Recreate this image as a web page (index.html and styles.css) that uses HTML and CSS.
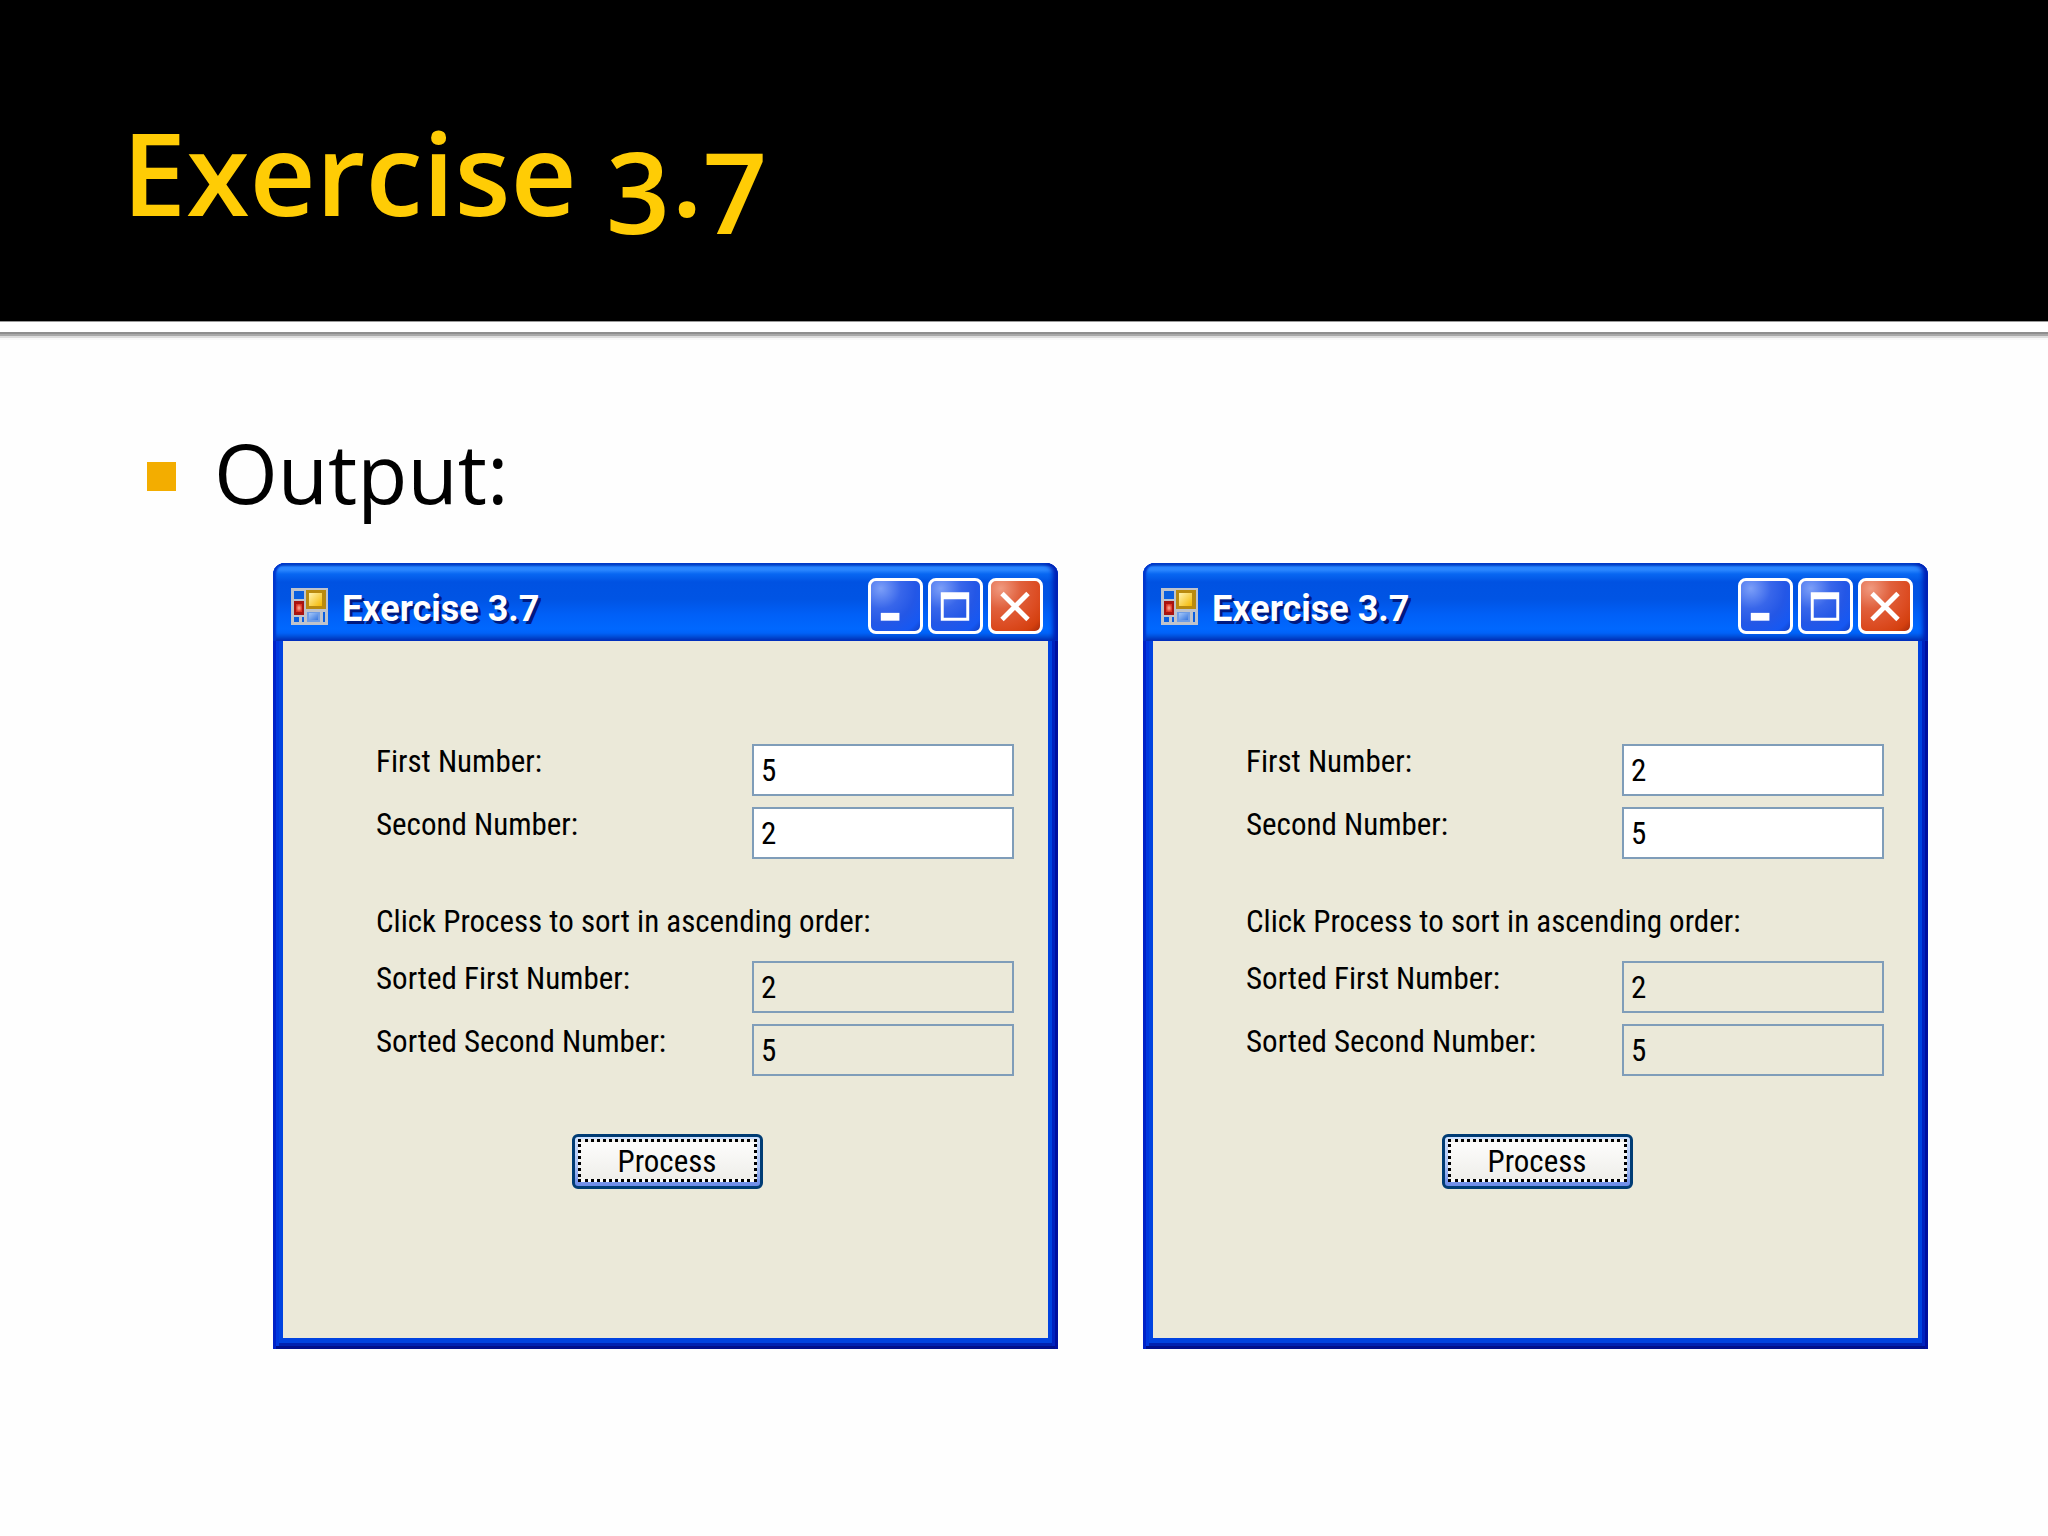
FILE: index.html
```
<!DOCTYPE html>
<html lang="en">
<head>
<meta charset="utf-8">
<meta name="viewport" content="width=device-width, initial-scale=1">
<title>Exercise 3.7</title>
<link rel="stylesheet" href="styles.css">
</head>
<body>
<svg class="sprite" width="0" height="0" aria-hidden="true">
  <defs>
    <linearGradient id="gold" x1="0" y1="0" x2="1" y2="1"><stop offset="0" stop-color="#fff3b0"/><stop offset="1" stop-color="#f5b800"/></linearGradient>
    <radialGradient id="ruby"><stop offset="0" stop-color="#ffb09c"/><stop offset="1" stop-color="#dd3323"/></radialGradient>
    <linearGradient id="sky" x1="0" y1="0" x2="1" y2="1"><stop offset="0" stop-color="#a5c8fa"/><stop offset="1" stop-color="#3a78df"/></linearGradient>
    <symbol id="form-icon" viewBox="0 0 37 37">
      <path fill="#bfc3cb" d="M0 0h37v37H0z"/>
      <path fill="#0a5fe0" d="M3 3h10v8H3zM3 29h5v5H3zM11 29h2v5h-2zM32 24h2v10h-2z"/>
      <path fill="#b98a10" d="M15 2h20v19H15z"/><path fill="url(#gold)" d="M18 5h13v13H18z"/>
      <path fill="#a81410" d="M3 13h10v14H3z"/><path fill="url(#ruby)" d="M5 16h6v8H5z"/>
      <path fill="#6f9de6" d="M16 24h13v10H16z"/><path fill="url(#sky)" d="M18 25h9v7h-9z"/>
    </symbol>
    <symbol id="minimize" viewBox="0 0 50 50"><path fill="#fff" d="M10 32h19v8H10z"/></symbol>
    <symbol id="maximize" viewBox="0 0 50 50"><path fill="#fff" fill-rule="evenodd" d="M10 11h29v29H10zM13 18v19h23V18z"/></symbol>
    <symbol id="close" viewBox="0 0 50 50"><path stroke="#fff" stroke-width="5" stroke-linecap="square" d="M13 14l23 23M36 14L13 37"/></symbol>
  </defs>
</svg>

<header class="slide-header">
  <h1 class="slide-title">Exercise 3.7</h1>
</header>

<main class="slide-body">
  <ul class="bullets">
    <li class="bullet"><span class="bullet-text">Output:</span></li>
  </ul>

  <div class="windows">
    <section class="window">
      <div class="titlebar">
        <svg class="app-icon" aria-hidden="true"><use href="#form-icon"/></svg>
        <h2 class="window-title">Exercise 3.7</h2>
        <div class="controls">
          <button class="control" type="button" aria-label="Minimize"><svg class="glyph"><use href="#minimize"/></svg></button>
          <button class="control" type="button" aria-label="Maximize"><svg class="glyph"><use href="#maximize"/></svg></button>
          <button class="control control-close" type="button" aria-label="Close"><svg class="glyph"><use href="#close"/></svg></button>
        </div>
      </div>
      <form class="client">
        <div class="row"><label class="label" for="a-first">First Number:</label><input class="field" id="a-first" type="text" value="5"></div>
        <div class="row"><label class="label" for="a-second">Second Number:</label><input class="field" id="a-second" type="text" value="2"></div>
        <p class="hint">Click Process to sort in ascending order:</p>
        <div class="row"><label class="label" for="a-sorted-first">Sorted First Number:</label><input class="field" id="a-sorted-first" type="text" value="2" readonly></div>
        <div class="row"><label class="label" for="a-sorted-second">Sorted Second Number:</label><input class="field" id="a-sorted-second" type="text" value="5" readonly></div>
        <button class="process" type="button"><span class="process-face">Process</span></button>
      </form>
    </section>

    <section class="window">
      <div class="titlebar">
        <svg class="app-icon" aria-hidden="true"><use href="#form-icon"/></svg>
        <h2 class="window-title">Exercise 3.7</h2>
        <div class="controls">
          <button class="control" type="button" aria-label="Minimize"><svg class="glyph"><use href="#minimize"/></svg></button>
          <button class="control" type="button" aria-label="Maximize"><svg class="glyph"><use href="#maximize"/></svg></button>
          <button class="control control-close" type="button" aria-label="Close"><svg class="glyph"><use href="#close"/></svg></button>
        </div>
      </div>
      <form class="client">
        <div class="row"><label class="label" for="b-first">First Number:</label><input class="field" id="b-first" type="text" value="2"></div>
        <div class="row"><label class="label" for="b-second">Second Number:</label><input class="field" id="b-second" type="text" value="5"></div>
        <p class="hint">Click Process to sort in ascending order:</p>
        <div class="row"><label class="label" for="b-sorted-first">Sorted First Number:</label><input class="field" id="b-sorted-first" type="text" value="2" readonly></div>
        <div class="row"><label class="label" for="b-sorted-second">Sorted Second Number:</label><input class="field" id="b-sorted-second" type="text" value="5" readonly></div>
        <button class="process" type="button"><span class="process-face">Process</span></button>
      </form>
    </section>
  </div>
</main>
</body>
</html>
```
FILE: styles.css
```
* { box-sizing: border-box; }

body {
  margin: 0;
  background: #fefefe;
  color: #000;
  font-family: "Roboto Condensed", "Liberation Sans Narrow", "Liberation Sans", sans-serif;
  font-size: 31px;
  line-height: 36px;
}

.sprite { display: block; height: 0; }

.slide-header {
  padding: 92px 122px 69px;
  background: #000;
  border-bottom: 1px solid #999;
}

.slide-title {
  margin: 0;
  color: #ffcc05;
  font-family: "Open Sans", "Noto Sans", sans-serif;
  font-size: 115px;
  font-weight: 600;
  line-height: 160px;
  font-variant-numeric: oldstyle-nums;
}

.slide-body {
  padding: 0 120px 120px;
  background: linear-gradient(#fff 0 10px, #8e8e8e 10px 12px, #a8a8a8 12px 14px, #dcdcdc 14px 16px, #f8f8f8 16px 18px, #fefefe 18px);
}

.bullets {
  margin: 0;
  padding: 94px 27px 0;
  list-style: none;
}

.bullet {
  display: flex;
  align-items: center;
  gap: 38px;
  font-family: "Open Sans", "Noto Sans", sans-serif;
  font-size: 82px;
  line-height: 112px;
}

.bullet-text { padding-bottom: 8px; }

.bullet::before {
  content: "";
  width: 29px;
  height: 29px;
  background: #f3ad00;
}

.windows {
  display: grid;
  grid-template-columns: 1fr 1fr;
  gap: 85px;
  padding: 27px 0 0 153px;
}

.window {
  padding: 0 10px 11px;
  border-radius: 12px 12px 0 0;
  background: #0043e0;
  box-shadow: inset 3px 0 #0022c8, inset -3px 0 #0010a0, inset 0 -3px #00108c, inset 6px 0 #0038e0, inset -6px 0 #0022c0, inset 0 -6px #0022b0;
}

.titlebar {
  display: flex;
  align-items: center;
  height: 78px;
  margin: 0 -10px;
  padding: 8px 15px 0 18px;
  border-radius: 12px 12px 0 0;
  background: linear-gradient(#0450d0 0 2px, #2a86ff 4px 7px, #0867f2 11px, #0052e2 19px, #0054e4 36px, #0060f8 52px, #0068ff 66px, #0062f8 70px, #0040c4 76px, #0038b8 78px);
  box-shadow: inset 3px 0 2px #0036cc, inset -5px 0 4px #0020b4;
}

.app-icon { width: 37px; height: 37px; }

.window-title {
  margin: 0 auto 0 14px;
  padding-top: 5px;
  color: #fff;
  font-family: Roboto, sans-serif;
  font-size: 36px;
  font-weight: 700;
  text-shadow: 3px 3px #001a80;
}

.controls { display: flex; gap: 5px; }

.control {
  width: 55px;
  height: 56px;
  padding: 0;
  border: 3px solid #fff;
  border-radius: 8px;
  background: radial-gradient(circle at 20% 15%, #7c9ff8, #3866ea 35%, #2457e6 60%, #1658f2 85%, #1240c4);
}

.control-close { background: radial-gradient(circle at 20% 15%, #f09a80, #e0603c 35%, #dc4c22 65%, #d4400f 85%, #a82c0c); }

.glyph { display: block; width: 49px; height: 50px; }

.client {
  display: flex;
  flex-direction: column;
  gap: 11px;
  padding: 103px 34px 149px 93px;
  background: #ebe9d9;
}

.row {
  display: grid;
  grid-template-columns: 1fr 262px;
  align-items: start;
}

.field {
  width: 100%;
  height: 52px;
  padding: 0 7px;
  border: 2px solid #7f9db9;
  border-radius: 0;
  background: #fff;
  color: #000;
  font: inherit;
}

.field:read-only { background: transparent; }

.hint { margin: 34px 0 10px; }

.process {
  align-self: center;
  width: 191px;
  height: 55px;
  margin: 47px 56px 0 0;
  padding: 2px 3px 4px;
  border: 3px solid #003c74;
  border-radius: 6px;
  background: linear-gradient(#cfe2ff, #a9c2f6 60%, #6a8ae8);
  color: #000;
  font: inherit;
}

.process-face {
  display: block;
  height: 43px;
  border: 3px dotted #000;
  background: linear-gradient(#fdfdfc, #efeeea);
  line-height: 40px;
}
```
